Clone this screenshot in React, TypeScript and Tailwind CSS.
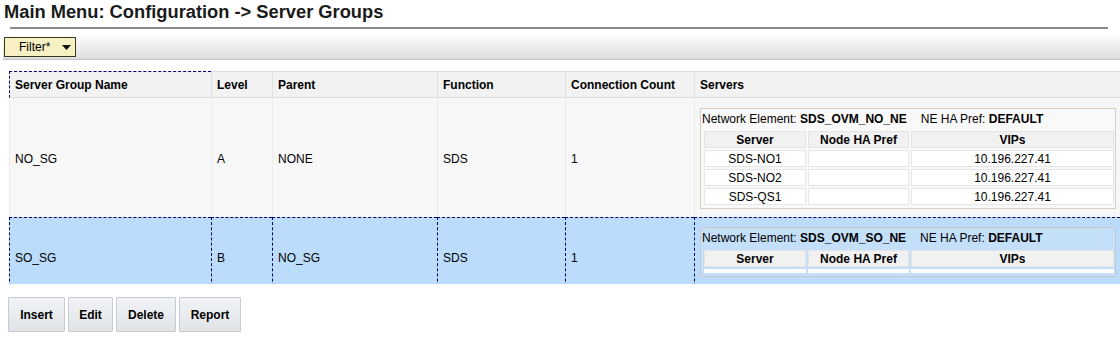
import React from "react";

const servers1 = [
  { name: "SDS-NO1", pref: "", vip: "10.196.227.41" },
  { name: "SDS-NO2", pref: "", vip: "10.196.227.41" },
  { name: "SDS-QS1", pref: "", vip: "10.196.227.41" },
];

function ServerBox({ ne, rows, selected }: { ne: string; rows: { name: string; pref: string; vip: string }[]; selected?: boolean }) {
  return (
    <div
      className={
        "w-[416px] border pl-[1px] pr-[2px] pb-[1px] " +
        (selected ? "border-[#c9c9c9] bg-[#c4dff9]" : "border-[#d8cec3] bg-[#f9f9f9]")
      }
    >
      <div className="h-[20px] flex items-center text-[12px] text-black leading-none">
        <span>Network Element:&nbsp;</span>
        <span className="font-bold">{ne}</span>
        <span className="ml-[14px]">NE HA Pref:&nbsp;</span>
        <span className="font-bold">DEFAULT</span>
      </div>
      <table className="border-separate border-spacing-[2px] table-fixed w-[414px] text-[12px] leading-none">
        <colgroup>
          <col className="w-[102px]" />
          <col className="w-[101px]" />
          <col />
        </colgroup>
        <thead>
          <tr>
            <th className="h-[17px] bg-[#f1f1f1] border border-[#e4e4e4] font-bold text-center p-0">Server</th>
            <th className="h-[17px] bg-[#f1f1f1] border border-[#e4e4e4] font-bold text-center p-0">Node HA Pref</th>
            <th className="h-[17px] bg-[#f1f1f1] border border-[#e4e4e4] font-bold text-center p-0">VIPs</th>
          </tr>
        </thead>
        <tbody>
          {rows.length === 0 ? (
            <tr>
              <td className="h-[4px] bg-white p-0"></td>
              <td className="h-[4px] bg-white p-0"></td>
              <td className="h-[4px] bg-white p-0"></td>
            </tr>
          ) : (
            rows.map((r) => (
              <tr key={r.name}>
                <td className="h-[17px] bg-white border border-[#e6e6e6] text-center p-0">{r.name}</td>
                <td className="h-[17px] bg-white border border-[#e6e6e6] text-center p-0">{r.pref}</td>
                <td className="h-[17px] bg-white border border-[#e6e6e6] text-center p-0">{r.vip}</td>
              </tr>
            ))
          )}
        </tbody>
      </table>
    </div>
  );
}

const buttons: [string, string][] = [
  ["Insert", "w-[57px]"],
  ["Edit", "w-[45px]"],
  ["Delete", "w-[60px]"],
  ["Report", "w-[62px]"],
];

export default function App() {
  const th =
    "h-[27px] text-left align-middle font-bold text-[12px] pl-[5px] bg-[#f2f2f2] border-l border-t border-b border-l-[#dde1e5] border-t-[#d6dce2] border-b-[#d6dce2]";
  const td1 = "align-middle text-[12px] pl-[5px] pt-[2px] border-l border-[#ececec]";
  const td2 = "align-middle text-[12px] pl-[5px] border-l border-t border-dashed border-[#00006e]";
  return (
    <div className="w-[1120px] h-[344px] bg-white overflow-hidden text-black font-['Liberation_Sans',Arial,sans-serif]">
      <div className="pl-[4px] pt-[1px] h-[27px] text-[18.3px] font-bold leading-[22px] text-[#1a1a1a]">
        Main Menu: Configuration -&gt; Server Groups
      </div>
      <div className="ml-[10px] w-[1098px] h-[2px] bg-[#8a8a8a]" />
      <div className="mt-[7px] ml-[3px] h-[24px] bg-gradient-to-b from-[#fbfbfb] to-[#dedede] border-b border-[#c4c4c4] flex items-start">
        <div className="ml-[1px] mt-[1px] w-[72px] h-[20px] bg-[#f7f0c2] border border-[#3a3a20] flex items-center text-[12px]">
          <span className="ml-[14px]">Filter*</span>
          <svg className="ml-[12px]" width="9" height="5" viewBox="0 0 9 5">
            <polygon points="0,0 9,0 4.5,5" fill="#111" />
          </svg>
        </div>
      </div>
      <div className="mt-[11px] ml-[9px] w-[1111px] h-[213px] overflow-hidden">
        <table className="table-fixed border-separate border-spacing-0 w-[1111px] leading-none">
          <colgroup>
            <col className="w-[202px]" />
            <col className="w-[61px]" />
            <col className="w-[165px]" />
            <col className="w-[128px]" />
            <col className="w-[129px]" />
            <col className="w-[426px]" />
          </colgroup>
          <thead>
            <tr>
              <th className="h-[27px] text-left align-middle font-bold text-[12px] pl-[5px] bg-[#f2f2f2] border-l border-t border-b border-l-[#00006e] border-t-[#00006e] [border-left-style:dashed] [border-top-style:dashed] border-b-[#d6dce2]">
                Server Group Name
              </th>
              <th className={th}>Level</th>
              <th className={th}>Parent</th>
              <th className={th}>Function</th>
              <th className={th}>Connection Count</th>
              <th className={th}>Servers</th>
            </tr>
          </thead>
          <tbody>
            <tr className="h-[119px] bg-[#f7f7f7]">
              <td className={td1}>NO_SG</td>
              <td className={td1}>A</td>
              <td className={td1}>NONE</td>
              <td className={td1}>SDS</td>
              <td className={td1}>1</td>
              <td className="align-top border-l border-[#ececec] pl-[5px] pt-[10px]">
                <ServerBox ne="SDS_OVM_NO_NE" rows={servers1} />
              </td>
            </tr>
            <tr className="h-[80px] bg-[#bcdcfc]">
              <td className={td2}>SO_SG</td>
              <td className={td2}>B</td>
              <td className={td2}>NO_SG</td>
              <td className={td2}>SDS</td>
              <td className={td2}>1</td>
              <td className="align-top border-l border-t border-dashed border-[#00006e] pl-[5px] pt-[9px]">
                <ServerBox ne="SDS_OVM_SO_NE" rows={[]} selected />
              </td>
            </tr>
          </tbody>
        </table>
      </div>
      <div className="mt-[13px] ml-[8px] flex gap-[3px]">
        {buttons.map(([b, w]) => (
          <button
            key={b}
            className={
              w +
              " h-[35px] px-0 bg-gradient-to-b from-[#f1f3f5] to-[#e1e4e7] border border-[#c5cbd1] rounded-[1px] text-[12px] font-bold text-black"
            }
          >
            {b}
          </button>
        ))}
      </div>
    </div>
  );
}
